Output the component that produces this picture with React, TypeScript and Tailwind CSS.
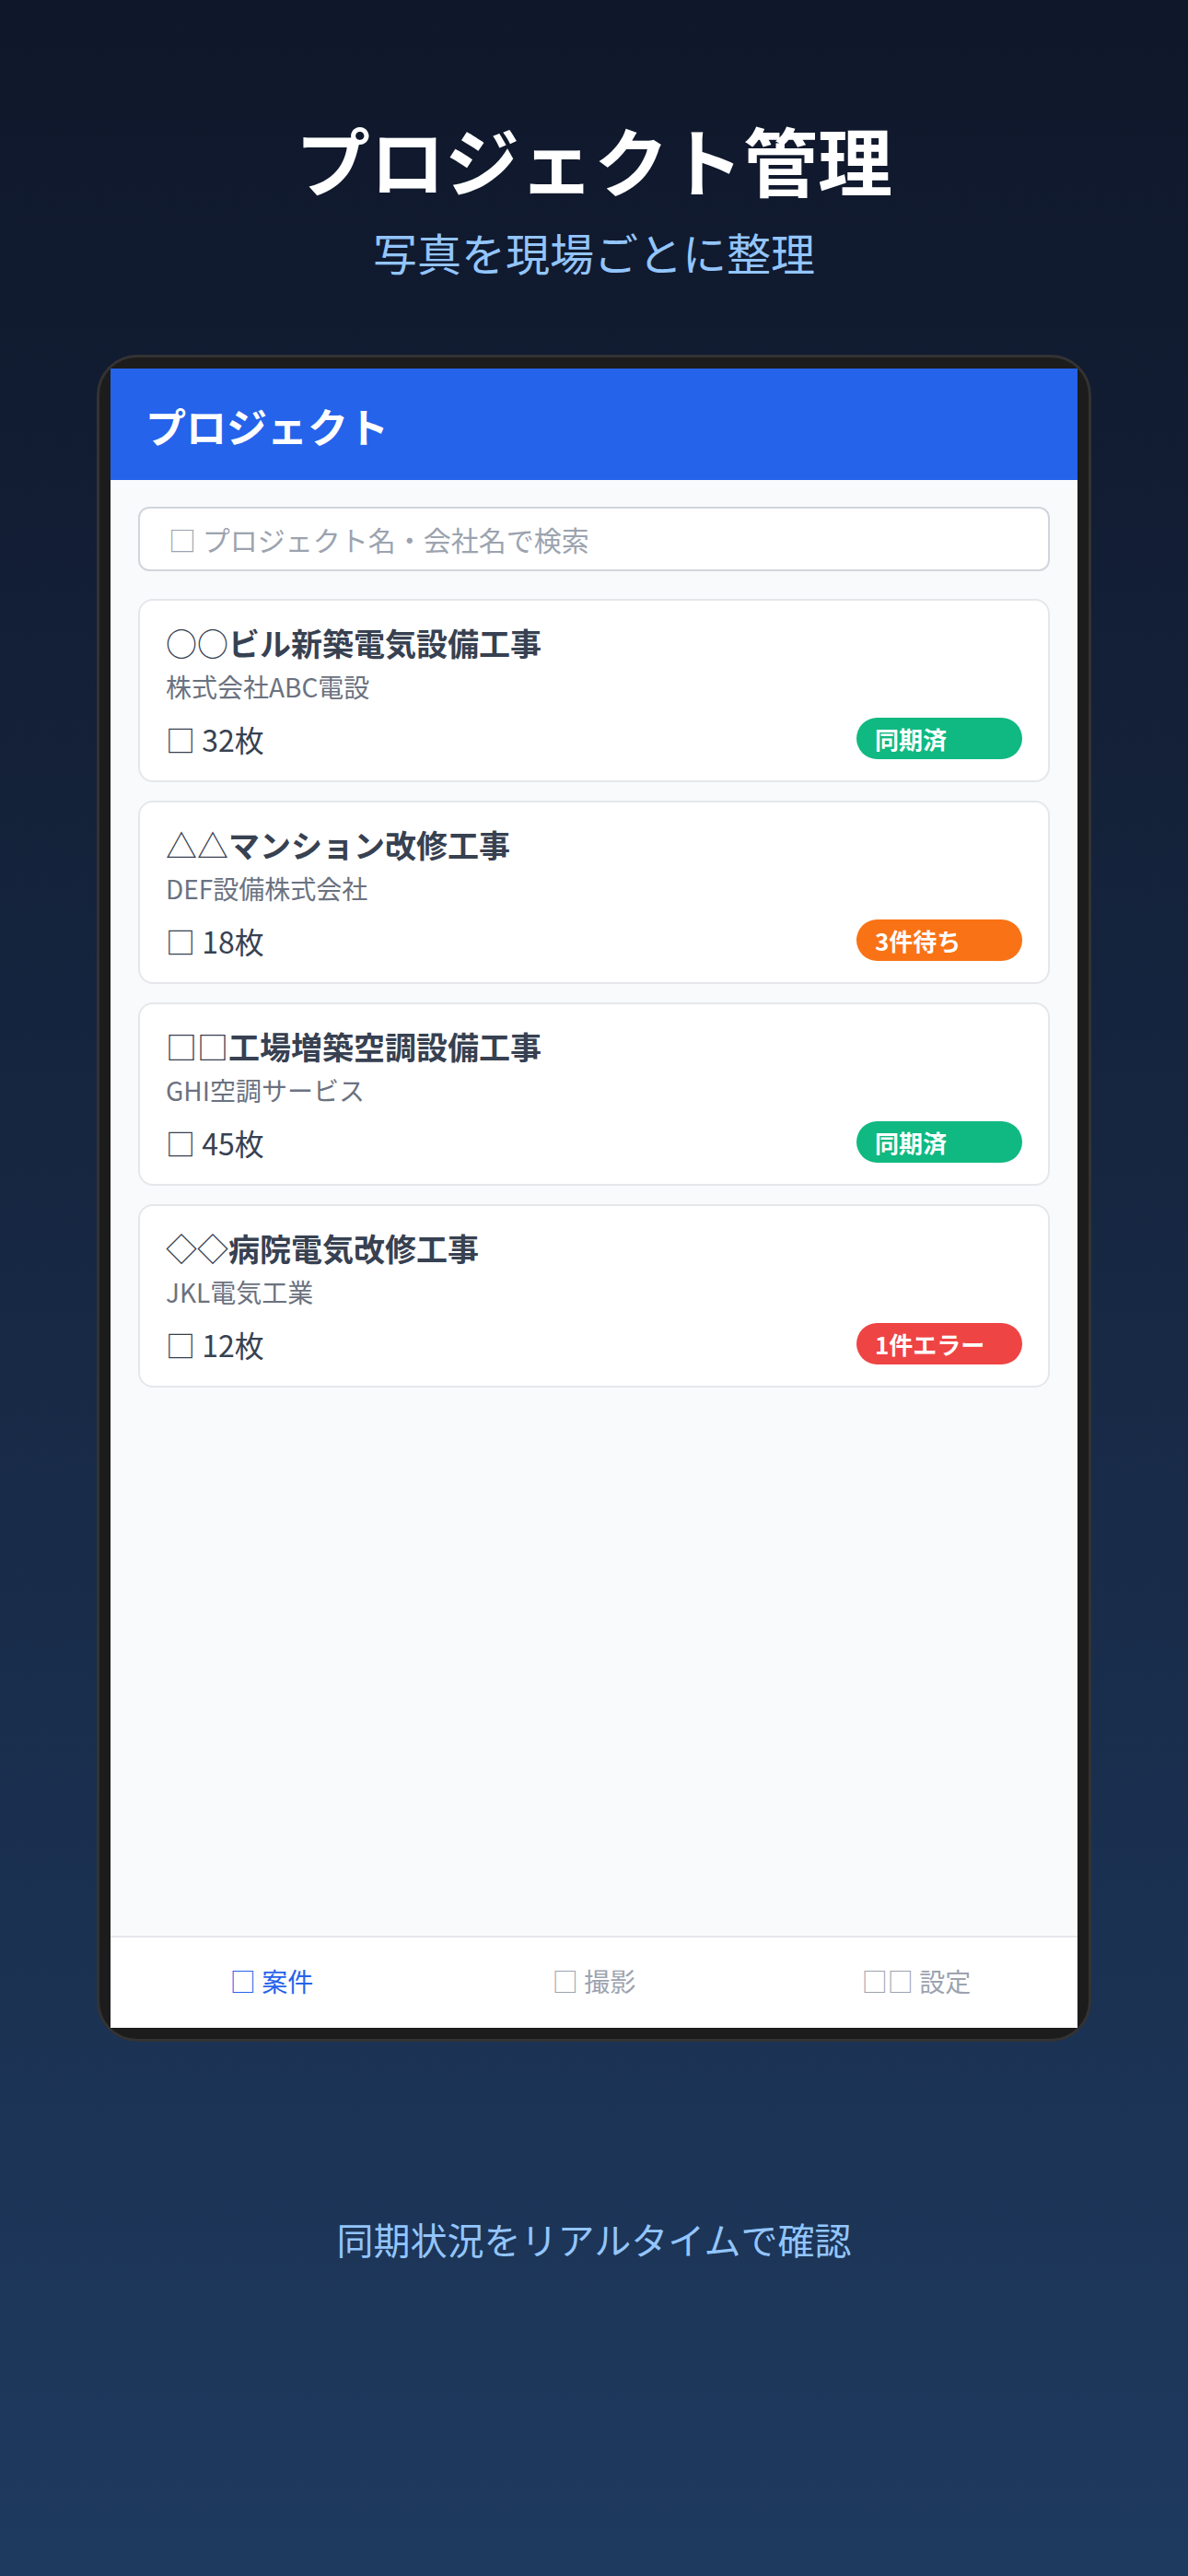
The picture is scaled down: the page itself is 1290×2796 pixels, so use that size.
const projects = [
  { mark: '○○', title: 'ビル新築電気設備工事', company: '株式会社ABC電設', count: 32, status: '同期済', tone: 'bg-[#10b981]' },
  { mark: '△△', title: 'マンション改修工事', company: 'DEF設備株式会社', count: 18, status: '3件待ち', tone: 'bg-[#f97316]' },
  { mark: '□□', title: '工場増築空調設備工事', company: 'GHI空調サービス', count: 45, status: '同期済', tone: 'bg-[#10b981]' },
  { mark: '◇◇', title: '病院電気改修工事', company: 'JKL電気工業', count: 12, status: '1件エラー', tone: 'bg-[#ef4444]' },
]

function ProjectCard({ p }: { p: (typeof projects)[number] }) {
  return (
    <div className="rounded-[16px] border-2 border-gray-200 bg-white px-[28px] pt-[24px] pb-[23px]">
      <h3 className="text-[34px] leading-[44px] font-bold text-[#374151]">
        <span className="font-normal">{p.mark}</span>
        {p.title}
      </h3>
      <p className="mt-[6px] text-[28px] leading-[38px] text-[#6b7280]">{p.company}</p>
      <div className="mt-[15px] flex h-[45px] items-center justify-between">
        <span className="text-[32px] text-[#374151]">□ {p.count}枚</span>
        <span
          className={`flex h-[45px] w-[180px] items-center rounded-full pl-[20px] text-[26px] font-bold text-white ${p.tone}`}
        >
          {p.status}
        </span>
      </div>
    </div>
  )
}

export default function App() {
  return (
    <div className="flex min-h-[2796px] w-full flex-col items-center bg-gradient-to-b from-[#0f172a] to-[#1e3a5f] font-['Noto_Sans_CJK_JP',sans-serif]">
      <h1 className="mt-[124px] text-[81px] leading-[96px] font-bold text-white">プロジェクト管理</h1>
      <p className="mt-[17px] text-[48px] leading-[72px] text-[#93c5fd]">写真を現場ごとに整理</p>

      <div className="mt-[76px] w-[1080px] rounded-[44px] border-[3px] border-[#333333] bg-[#1c1c1c] p-[12px]">
        <div className="flex h-[1801px] flex-col bg-gray-50">
          <div className="flex h-[121px] items-center bg-[#2563eb] px-[38px] pt-[3px]">
            <h2 className="text-[44px] font-bold text-white">プロジェクト</h2>
          </div>

          <div className="flex-1 px-[30px] pt-[29px]">
            <div className="flex h-[70px] items-center rounded-[12px] border-2 border-gray-300 bg-white px-[31px] text-[30px] text-[#9ca3af]">
              □ プロジェクト名・会社名で検索
            </div>
            <div className="mt-[30px] flex flex-col gap-[20px]">
              {projects.map((p) => (
                <ProjectCard key={p.title} p={p} />
              ))}
            </div>
          </div>

          <nav className="grid h-[100px] grid-cols-3 items-center border-t-2 border-gray-200 bg-white pb-[4px] text-[28px]">
            <span className="text-center text-[#2563eb]">□ 案件</span>
            <span className="text-center text-[#9ca3af]">□ 撮影</span>
            <span className="text-center text-[#9ca3af]">□□ 設定</span>
          </nav>
        </div>
      </div>

      <p className="mt-[184px] text-[40px] leading-[60px] text-[#93c5fd]">同期状況をリアルタイムで確認</p>
    </div>
  )
}
